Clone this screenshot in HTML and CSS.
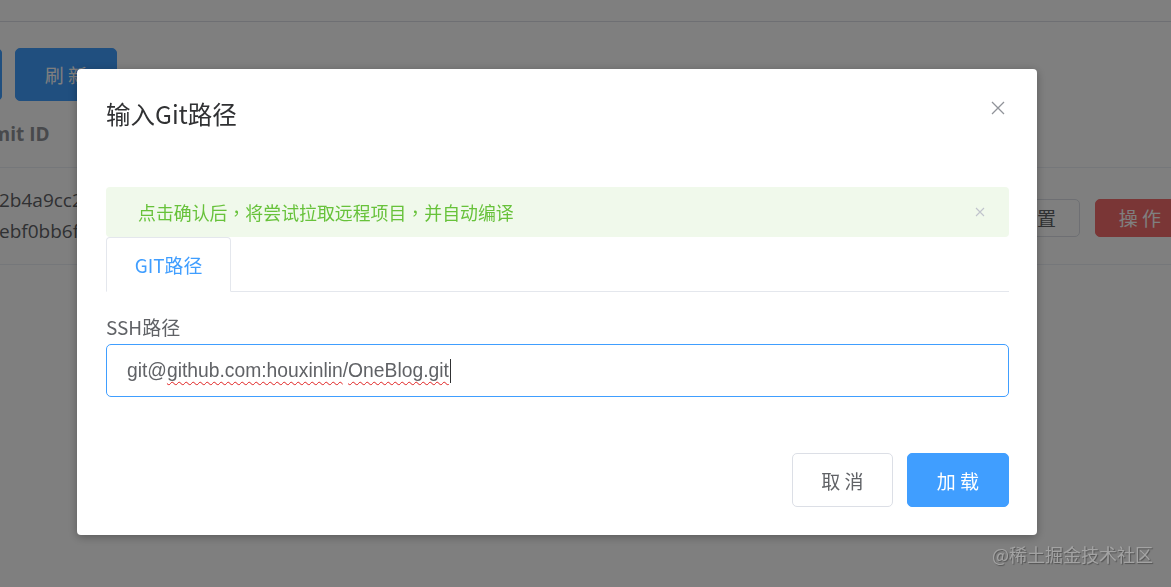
FILE: index.html
```html
<!DOCTYPE html>
<html lang="zh-CN">
<head>
<meta charset="utf-8">
<title>输入Git路径</title>
<link rel="stylesheet" href="styles.css">
</head>
<body>
<div class="page">
  <header class="topbar"></header>
  <div class="toolbar">
    <button class="btn btn-primary btn-first">查 询</button>
    <button class="btn btn-primary btn-refresh">刷 新</button>
  </div>
  <div class="table">
    <div class="thead">
      <div class="th-label">Commit ID</div>
    </div>
    <div class="trow">
      <div class="td-id">
        <span class="hash">2b4a9cc2d81e</span>
        <span class="hash">ebf0bb6f47a3</span>
      </div>
      <div class="td-ops">
        <button class="btn btn-plain btn-small">重 置</button>
        <button class="btn btn-danger btn-small">操 作</button>
      </div>
    </div>
  </div>
</div>

<div class="mask">
  <div class="dialog">
    <div class="dialog-header">
      <span class="dialog-title">输入Git路径</span>
      <svg class="dialog-close" width="14" height="14" viewBox="0 0 14 14"><path d="M1 1L13 13M13 1L1 13" stroke="#909399" stroke-width="1.3" fill="none"/></svg>
    </div>
    <div class="dialog-body">
      <div class="alert">
        <span class="alert-text" lang="zh-TW">点击确认后，将尝试拉取远程项目，并自动编译</span>
        <svg class="alert-close" width="10" height="10" viewBox="0 0 10 10"><path d="M1 1L9 9M9 1L1 9" stroke="#c0c4cc" stroke-width="1.1" fill="none"/></svg>
      </div>
      <div class="tabs-nav">
        <div class="tab-item">GIT路径</div>
      </div>
      <div class="tab-pane">
        <div class="form-label">SSH路径</div>
        <div class="input">git@<span class="typo">github.com:houxinlin</span>/<span class="typo">OneBlog.git</span><span class="caret"></span></div>
      </div>
    </div>
    <div class="dialog-footer">
      <button class="btn btn-plain btn-large btn-cancel">取 消</button>
      <button class="btn btn-primary btn-large btn-ok">加 载</button>
    </div>
  </div>
</div>

<div class="watermark">@稀土掘金技术社区</div>
</body>
</html>
```

FILE: styles.css
```css
* { box-sizing: border-box; }

html, body {
  margin: 0;
  padding: 0;
  width: 1171px;
  height: 587px;
  overflow: hidden;
  background: #ffffff;
  font-family: "Noto Sans", "Noto Sans CJK SC", sans-serif;
}

.page {
  width: 1171px;
  height: 587px;
}

.topbar {
  height: 22px;
  border-bottom: 1px solid #dcdfe6;
  background: #ffffff;
}

.toolbar {
  display: flex;
  gap: 13px;
  margin-top: 26px;
  margin-left: -98px;
}

.btn {
  font-family: "Noto Sans CJK SC", "Noto Sans", sans-serif;
  border-radius: 5px;
  border: 1px solid transparent;
  padding: 0;
  cursor: pointer;
  display: flex;
  align-items: center;
  justify-content: center;
}

.btn-primary {
  background: #409eff;
  border-color: #409eff;
  color: #ffffff;
}

.btn-first, .btn-refresh {
  width: 102px;
  height: 53px;
  font-size: 19px;
}
.btn-first { width: 100px; }

.btn-plain {
  background: #ffffff;
  border-color: #dcdfe6;
  color: #606266;
}

.btn-danger {
  background: #f56c6c;
  border-color: #f56c6c;
  color: #ffffff;
}

.btn-small {
  height: 38px;
  width: 90px;
  font-size: 19px;
}

.table {
  color: #606266;
}

.thead {
  height: 67px;
  display: flex;
  align-items: center;
  border-bottom: 1px solid #ebeef5;
}

.th-label {
  margin-left: -51px;
  font-size: 19px;
  font-weight: 700;
  color: #909399;
  font-family: "Open Sans", "Noto Sans", sans-serif;
}

.trow {
  height: 97px;
  border-bottom: 1px solid #ebeef5;
  display: flex;
  justify-content: space-between;
  align-items: center;
}

.td-id {
  display: flex;
  flex-direction: column;
  margin-left: -1px;
  font-family: "Open Sans", "Noto Sans", sans-serif;
  font-size: 19px;
  line-height: 31px;
  color: #606266;
}

.td-ops {
  display: flex;
  gap: 15px;
  margin-right: -14px;
  margin-top: 3px;
}

/* overlay + dialog */
.mask {
  position: fixed;
  inset: 0;
  background: rgba(0, 0, 0, 0.5);
}

.dialog {
  width: 960px;
  margin: 69px 0 0 77px;
  background: #ffffff;
  border-radius: 4px;
  box-shadow: 0 2px 10px rgba(0, 0, 0, 0.3);
  padding: 0 28px 28px 29px;
}

.dialog-header {
  display: flex;
  justify-content: space-between;
  align-items: flex-start;
  padding-top: 29px;
  padding-right: 4px;
}

.dialog-title {
  font-family: "Noto Sans CJK SC", "Noto Sans", sans-serif;
  font-size: 24.5px;
  line-height: 32px;
  color: #303133;
}

.dialog-close {
  margin-top: 3px;
  display: block;
}

.dialog-body {
  padding-top: 57px;
}

.alert {
  height: 50px;
  background: #f0f9eb;
  border-radius: 4px;
  display: flex;
  align-items: center;
  justify-content: space-between;
  padding: 0 24px 0 32px;
}

.alert-text {
  font-family: "Noto Sans CJK TC", "Noto Sans CJK SC", sans-serif;
  font-size: 17.9px;
  line-height: 47px;
  color: #67c23a;
}

.alert-close {
  display: block;
}

.tabs-nav {
  height: 55px;
  border-bottom: 1px solid #e4e7ed;
  display: flex;
}

.tab-item {
  width: 125px;
  height: 55px;
  border: 1px solid #e4e7ed;
  border-bottom-color: #ffffff;
  border-radius: 4px 4px 0 0;
  display: flex;
  align-items: center;
  justify-content: center;
  font-family: "Noto Sans CJK SC", sans-serif;
  font-size: 18.9px;
  color: #409eff;
}

.tab-pane {
  padding-top: 21px;
}

.form-label {
  font-family: "Noto Sans CJK SC", sans-serif;
  font-size: 19px;
  line-height: 28px;
  color: #606266;
  margin-bottom: 3px;
}

.input {
  height: 53px;
  border: 1px solid #409eff;
  border-radius: 5px;
  display: flex;
  align-items: center;
  padding-left: 20px;
  font-family: "Liberation Sans", Arial, sans-serif;
  font-size: 19.3px;
  color: #606266;
  white-space: pre;
}

.typo {
  text-decoration: underline wavy #e02020;
  text-decoration-thickness: 1.2px;
  text-decoration-skip-ink: none;
  text-underline-offset: 4px;
}

.caret {
  display: inline-block;
  width: 1px;
  height: 24px;
  background: #303133;
  margin-left: 1px;
}

.dialog-footer {
  display: flex;
  justify-content: flex-end;
  gap: 14px;
  padding-top: 56px;
}

.btn-large {
  height: 54px;
  font-size: 19px;
}

.btn-cancel { width: 101px; }
.btn-ok { width: 102px; }

.watermark {
  position: fixed;
  right: 18px;
  bottom: 20px;
  font-family: "Noto Sans CJK SC", sans-serif;
  font-size: 18px;
  color: #a3a3a3;
  text-shadow: 1px 1px 1px rgba(0, 0, 0, 0.35);
}
```
